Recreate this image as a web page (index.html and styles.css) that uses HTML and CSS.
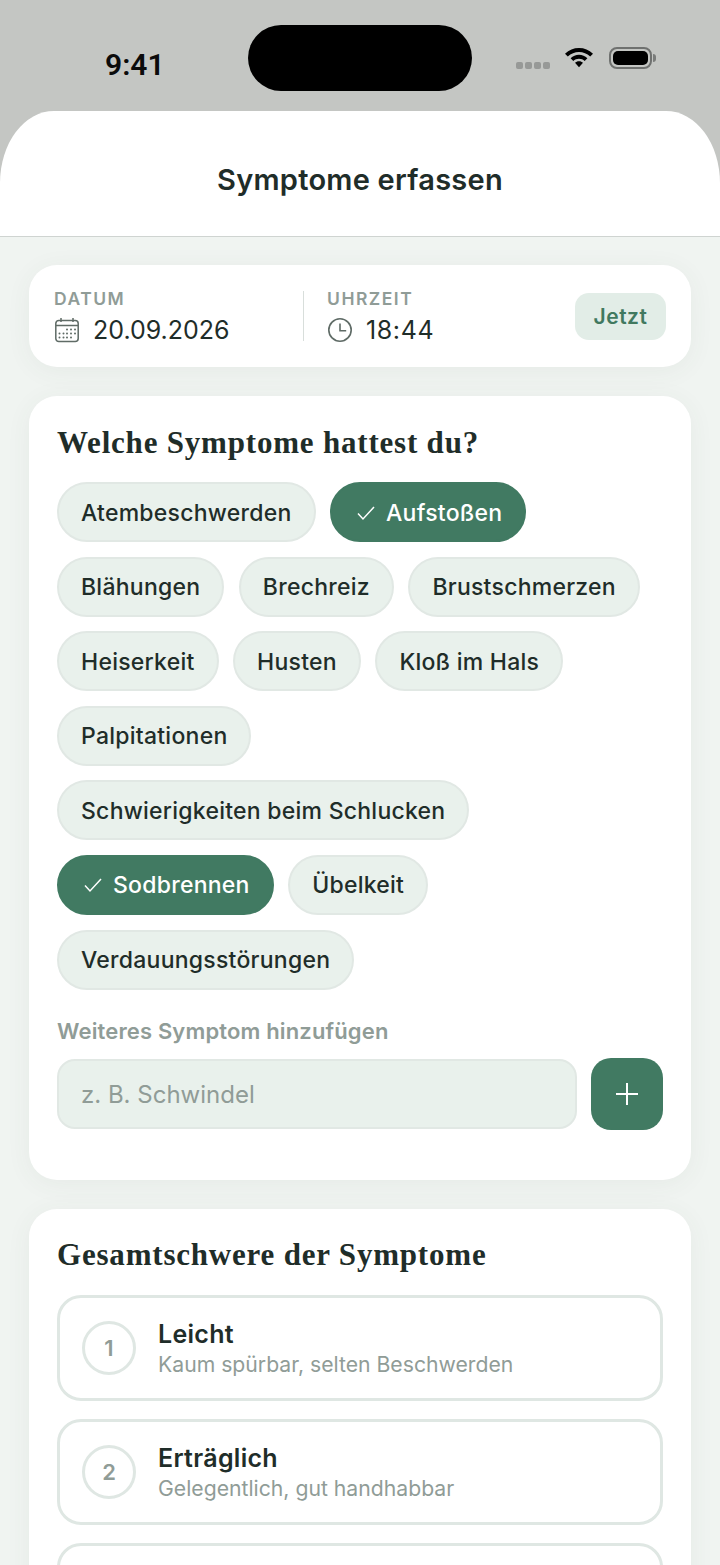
FILE: index.html
```html
<!DOCTYPE html>
<html lang="de">
<head>
<meta charset="utf-8">
<title>Symptome erfassen</title>
<link rel="stylesheet" href="styles.css">
</head>
<body>
<div class="screen">
  <div class="statusbar">
    <span class="time">9:41</span>
    <div class="island"></div>
    <div class="status-icons">
      <span class="signal"><i></i><i></i><i></i><i></i></span>
      <svg class="wifi" width="30" height="22" viewBox="0 0 30 22"><path d="M15 2C9.600 2 5 4 1 7.700l2.800 2.800C7 7.700 10.800 6 15 6s8 1.700 11.200 4.500L29 7.700C25 4 20.400 2 15 2z"/><path d="M15 8.800c-3.200 0-6.100 1.200-8.400 3.400l2.700 2.700c1.500-1.400 3.500-2.200 5.700-2.200s4.200.8 5.700 2.200l2.700-2.700c-2.300-2.200-5.200-3.400-8.400-3.400z"/><path d="M15 15.200c-1.600 0-3 .6-4 1.600l4 4.400 4-4.400c-1-1-2.400-1.600-4-1.600z"/></svg>
      <span class="battery"><span class="battery-fill"></span></span>
      <span class="battery-cap"></span>
    </div>
  </div>
  <header class="topbar"><h1>Symptome erfassen</h1></header>
  <main class="content">
    <section class="card datetime">
      <div class="dt-col dt-date">
        <div class="dt-label">DATUM</div>
        <div class="dt-value">
          <svg class="dt-icon" width="26" height="26" viewBox="0 0 26 26" fill="none" stroke="#5f6b66" stroke-width="1.500"><rect x="1.800" y="3.500" width="22.400" height="21" rx="3"/><path d="M2 8.500h22M7 1v4M19 1v4"/><g fill="#5f6b66" stroke="none"><circle cx="13" cy="12.500" r="1"/><circle cx="17" cy="12.500" r="1"/><circle cx="21" cy="12.500" r="1"/><circle cx="5.500" cy="16.500" r="1"/><circle cx="9.500" cy="16.500" r="1"/><circle cx="13" cy="16.500" r="1"/><circle cx="17" cy="16.500" r="1"/><circle cx="21" cy="16.500" r="1"/><circle cx="5.500" cy="20.500" r="1"/><circle cx="9.500" cy="20.500" r="1"/><circle cx="13" cy="20.500" r="1"/><circle cx="17" cy="20.500" r="1"/></g></svg>
          <span>20.09.2026</span>
        </div>
      </div>
      <div class="dt-col dt-time">
        <div class="dt-label">UHRZEIT</div>
        <div class="dt-value">
          <svg class="dt-icon" width="26" height="26" viewBox="0 0 26 26" fill="none" stroke="#5f6b66" stroke-width="1.600"><circle cx="13" cy="13" r="11.200"/><path d="M13 6.500V13.800h6.200"/></svg>
          <span class="time-value">18:44</span>
        </div>
      </div>
      <button class="now">Jetzt</button>
    </section>

    <section class="card symptoms">
      <h2>Welche Symptome hattest du?</h2>
      <div class="chips">
        <span class="chip">Atembeschwerden</span>
        <span class="chip on"><svg class="check" width="20" height="16" viewBox="0 0 20 16" fill="none" stroke="#fff" stroke-width="1.500"><path d="M2 8.500l5 5.500L18 2"/></svg>Aufstoßen</span>
        <span class="chip">Blähungen</span>
        <span class="chip">Brechreiz</span>
        <span class="chip">Brustschmerzen</span>
        <span class="chip">Heiserkeit</span>
        <span class="chip">Husten</span>
        <span class="chip">Kloß im Hals</span>
        <span class="chip">Palpitationen</span>
        <span class="chip">Schwierigkeiten beim Schlucken</span>
        <span class="chip on"><svg class="check" width="20" height="16" viewBox="0 0 20 16" fill="none" stroke="#fff" stroke-width="1.500"><path d="M2 8.500l5 5.500L18 2"/></svg>Sodbrennen</span>
        <span class="chip">Übelkeit</span>
        <span class="chip">Verdauungsstörungen</span>
      </div>
      <div class="add-label">Weiteres Symptom hinzufügen</div>
      <div class="add-row">
        <div class="add-input">z. B. Schwindel</div>
        <button class="add-btn"><svg width="26" height="26" viewBox="0 0 26 26" stroke="#fff" stroke-width="2" fill="none"><path d="M13 2v22M2 13h22"/></svg></button>
      </div>
    </section>

    <section class="card severity">
      <h2>Gesamtschwere der Symptome</h2>
      <div class="levels">
        <div class="level"><span class="num">1</span><div><div class="lv-title">Leicht</div><div class="lv-sub">Kaum spürbar, selten Beschwerden</div></div></div>
        <div class="level"><span class="num">2</span><div><div class="lv-title">Erträglich</div><div class="lv-sub">Gelegentlich, gut handhabbar</div></div></div>
        <div class="level"></div>
      </div>
    </section>
  </main>
</div>
</body>
</html>
```
FILE: styles.css
```css
* { box-sizing: border-box; }
html, body { margin: 0; padding: 0; }
body { width: 720px; height: 1565px; overflow: hidden; background: #f0f4f1; font-family: Inter, "Liberation Sans", sans-serif; color: #1f2d29; }
.screen { width: 720px; height: 1565px; overflow: hidden; background: #c4c6c3; display: flex; flex-direction: column; }
.statusbar { height: 111px; flex: none; position: relative; display: flex; }
.time { position: absolute; left: 105px; top: 47px; font-size: 30px; line-height: 35px; font-weight: 600; color: #0b0b0b; font-family: Roboto, Inter, sans-serif; }
.island { position: absolute; left: 248px; top: 25px; width: 224px; height: 66px; border-radius: 33px; background: #000; }
.status-icons { position: absolute; left: 516px; top: 44px; height: 30px; width: 145px; }
.signal { position: absolute; left: 0; top: 18px; display: flex; gap: 2px; }
.signal i { width: 7px; height: 7px; border-radius: 2px; background: #979997; }
.wifi { position: absolute; left: 48px; top: 2px; }
.battery { position: absolute; left: 93px; top: 3px; width: 43px; height: 22px; border: 2px solid #6f716f; border-radius: 8px; padding: 2px; }
.battery-fill { display: block; width: 100%; height: 100%; background: #000; border-radius: 5px; }
.battery-cap { position: absolute; left: 137px; top: 10px; width: 3px; height: 8px; border-radius: 0 3px 3px 0; background: #7a7c7a; }
.topbar { height: 126px; flex: none; background: #fff; border-radius: 54px 54px 0 0 / 72px 72px 0 0; border-bottom: 1px solid #cfd4d1; display: flex; justify-content: center; padding-top: 51px; }
h1 { margin: 0; font-size: 29px; line-height: 36px; font-weight: 600; letter-spacing: 0.250px; color: #1f2d29; }
.content { flex: 1; background: #f0f4f1; padding: 28px 29px 0; display: flex; flex-direction: column; gap: 29px; }
.card { background: #fff; border-radius: 28px; box-shadow: 0 4px 26px rgba(60, 90, 75, 0.06); flex: none; }
.datetime { height: 102px; padding: 0 25px; display: flex; align-items: center; }
.dt-col { display: flex; flex-direction: column; justify-content: center; height: 50px; }
.dt-date { width: 250px; border-right: 1px solid #d8dedb; }
.dt-time { padding-left: 23px; flex: 1; }
.dt-label { font-size: 17.500px; line-height: 21px; font-weight: 600; letter-spacing: 1.500px; color: #909c97; margin-top: -8px; }
.dt-value { display: flex; align-items: center; gap: 13px; font-size: 25px; line-height: 32px; font-weight: 400; color: #1f2d29; margin-top: 5px; margin-bottom: -10px; }
.time-value { letter-spacing: 0.600px; }
.dt-icon { flex: none; }
.now { width: 91px; height: 47px; border: 0; border-radius: 14px; background: #e2ede7; color: #41795f; font: 600 21px Inter, sans-serif; letter-spacing: 0.500px; }
.symptoms { height: 784px; padding: 29px 28px 0; }
h2 { margin: 0; font-family: "Liberation Serif", serif; font-size: 31px; line-height: 36px; font-weight: 700; color: #1f2d29; letter-spacing: 0.800px; }
.chips { display: flex; flex-wrap: wrap; gap: 14.600px 14.500px; margin-top: 21px; }
.chip { height: 60px; border-radius: 30px; background: #e9f1ec; border: 2px solid #e1e8e4; display: inline-flex; align-items: center; padding: 1px 22px 0; font-size: 23px; font-weight: 500; letter-spacing: 0.250px; color: #1f2d29; white-space: nowrap; }
.chip.on { background: #417a62; border-color: #417a62; color: #fff; }
.check { margin-right: 10px; margin-left: 2px; }
.add-label { margin-top: 29.500px; font-size: 22px; line-height: 25px; font-weight: 600; letter-spacing: 0.150px; color: #909c97; }
.add-row { display: flex; gap: 14px; margin-top: 14px; align-items: center; }
.add-input { flex: 1; height: 70px; background: #e9f1ec; border: 2px solid #e1e8e4; border-radius: 18px; padding-left: 22px; display: flex; align-items: center; font-size: 24px; color: #909c97; }
.add-btn { width: 72px; height: 72px; flex: none; border: 0; border-radius: 20px; background: #417a62; display: flex; align-items: center; justify-content: center; padding: 0; }
.severity { height: 400px; padding: 28px 28px 0; }
.levels { display: flex; flex-direction: column; gap: 18px; margin-top: 22px; }
.level { height: 106px; flex: none; border: 3px solid #dfe7e3; border-radius: 24px; display: flex; align-items: center; gap: 22px; padding-left: 22px; }
.num { width: 54px; height: 54px; flex: none; border: 3px solid #dfe7e3; border-radius: 50%; display: flex; align-items: center; justify-content: center; font-size: 22px; font-weight: 600; color: #909c97; }
.lv-title { font-size: 25px; line-height: 30px; font-weight: 600; letter-spacing: 0.300px; color: #1f2d29; }
.lv-sub { font-size: 21.200px; line-height: 26px; color: #909c97; margin-top: 2px; }
```
